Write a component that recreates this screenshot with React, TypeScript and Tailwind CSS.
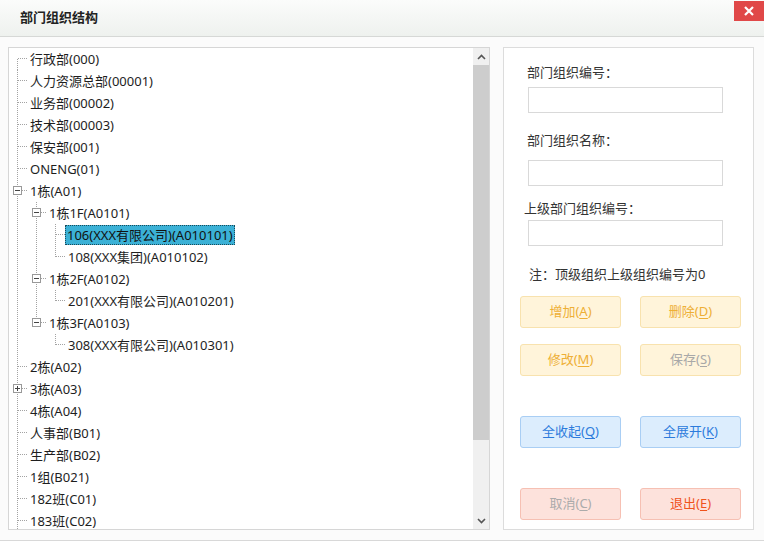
import React from "react";

type Guide = "v" | "none" | "tee" | "elbow" | "first";

interface Node {
  label: string;
  guides: Guide[];
  expander?: "-" | "+";
  selected?: boolean;
}

const TREE: Node[] = [
  { label: "行政部(000)", guides: ["first"] },
  { label: "人力资源总部(00001)", guides: ["tee"] },
  { label: "业务部(00002)", guides: ["tee"] },
  { label: "技术部(00003)", guides: ["tee"] },
  { label: "保安部(001)", guides: ["tee"] },
  { label: "ONENG(01)", guides: ["tee"] },
  { label: "1栋(A01)", guides: ["tee"], expander: "-" },
  { label: "1栋1F(A0101)", guides: ["v", "tee"], expander: "-" },
  { label: "106(XXX有限公司)(A010101)", guides: ["v", "v", "tee"], selected: true },
  { label: "108(XXX集团)(A010102)", guides: ["v", "v", "elbow"] },
  { label: "1栋2F(A0102)", guides: ["v", "tee"], expander: "-" },
  { label: "201(XXX有限公司)(A010201)", guides: ["v", "v", "elbow"] },
  { label: "1栋3F(A0103)", guides: ["v", "elbow"], expander: "-" },
  { label: "308(XXX有限公司)(A010301)", guides: ["v", "none", "elbow"] },
  { label: "2栋(A02)", guides: ["tee"] },
  { label: "3栋(A03)", guides: ["tee"], expander: "+" },
  { label: "4栋(A04)", guides: ["tee"] },
  { label: "人事部(B01)", guides: ["tee"] },
  { label: "生产部(B02)", guides: ["tee"] },
  { label: "1组(B021)", guides: ["tee"] },
  { label: "182班(C01)", guides: ["tee"] },
  { label: "183班(C02)", guides: ["tee"] },
];

const LINE = "#a3a3a3";

function GuideCell({ kind, expander }: { kind: Guide; expander?: "-" | "+" }) {
  return (
    <svg width="19" height="22" className="shrink-0 block">
      {(kind === "v" || kind === "tee") && (
        <line x1="8.5" y1="0" x2="8.5" y2="22" stroke={LINE} strokeDasharray="1 1" />
      )}
      {kind === "elbow" && <line x1="8.5" y1="0" x2="8.5" y2="11" stroke={LINE} strokeDasharray="1 1" />}
      {kind === "first" && <line x1="8.5" y1="11" x2="8.5" y2="22" stroke={LINE} strokeDasharray="1 1" />}
      {kind !== "v" && kind !== "none" && (
        <line x1="9" y1="10.5" x2="19" y2="10.5" stroke={LINE} strokeDasharray="1 1" />
      )}
      {expander && (
        <g>
          <rect x="4.5" y="6.5" width="8" height="8" fill="#fff" stroke="#999" />
          <line x1="6" y1="10.5" x2="11" y2="10.5" stroke="#444" />
          {expander === "+" && <line x1="8.5" y1="8" x2="8.5" y2="13" stroke="#444" />}
        </g>
      )}
    </svg>
  );
}

function TreeRow({ node }: { node: Node }) {
  const last = node.guides.length - 1;
  return (
    <div className="flex items-center h-[22px] shrink-0">
      {node.guides.map((g, i) => (
        <GuideCell key={i} kind={g} expander={i === last ? node.expander : undefined} />
      ))}
      {node.selected ? (
        <span className="ml-[-1px] h-[20px] leading-[18px] px-[1px] bg-[#3bb1d6] border border-dotted border-[#1a4a5a] text-[#111] whitespace-nowrap">
          {node.label}
        </span>
      ) : (
        <span className="pl-[2px] leading-[20px] text-[#1e1e1e] whitespace-nowrap">{node.label}</span>
      )}
    </div>
  );
}

function Chevron({ up }: { up?: boolean }) {
  return (
    <svg width="9" height="6" viewBox="0 0 9 6">
      <path
        d={up ? "M1 5 L4.5 1.5 L8 5" : "M1 1 L4.5 4.5 L8 1"}
        fill="none"
        stroke="#555"
        strokeWidth="1.6"
      />
    </svg>
  );
}

const BTN_STYLE = {
  yellow: "bg-[#fff4da] border-[#f8e2ae]",
  blue: "bg-[#dcedfd] border-[#a9cef4]",
  red: "bg-[#fde2dc] border-[#f6c0b3]",
};

function Btn({
  text,
  hot,
  tone,
  color,
}: {
  text: string;
  hot: string;
  tone: "yellow" | "blue" | "red";
  color: string;
}) {
  return (
    <button
      className={`w-[101px] h-[32px] rounded-[3px] border text-[13px] flex items-center justify-center ${BTN_STYLE[tone]} ${color}`}
    >
      {text}(<span className="underline underline-offset-2">{hot}</span>)
    </button>
  );
}

export default function App() {
  return (
    <div
      className="w-[764px] h-[541px] bg-[#fbfbfb] border-b border-[#d8d8d8] flex flex-col overflow-hidden text-[13px]"
      style={{ fontFamily: '"Noto Sans", "Noto Sans CJK SC", sans-serif' }}
    >
      {/* Title bar */}
      <div className="h-[37px] shrink-0 flex justify-between bg-gradient-to-b from-[#fbfcfb] to-[#eef1ee] border-b border-[#d6d8d6]">
        <div className="pl-[20px] pt-[8px] font-bold text-[13px] text-[#222]">部门组织结构</div>
        <button className="mt-[1px] w-[30px] h-[20px] bg-[#e04848] flex items-center justify-center">
          <svg width="12" height="12" viewBox="0 0 12 12">
            <path d="M2 2 L10 10 M10 2 L2 10" stroke="#fff" strokeWidth="2.2" />
          </svg>
        </button>
      </div>

      <div className="flex pt-[10px] pl-[8px] gap-[13px]">
        {/* Tree panel */}
        <div className="w-[482px] h-[483px] bg-white border border-[#d6d6d6] flex overflow-hidden">
          <div className="flex-1 flex flex-col overflow-hidden">
            {TREE.map((n, i) => (
              <TreeRow key={i} node={n} />
            ))}
          </div>
          <div className="w-[16px] flex flex-col bg-[#f0f0f0]">
            <div className="h-[17px] flex items-center justify-center">
              <Chevron up />
            </div>
            <div className="flex-1">
              <div className="h-[375px] bg-[#cdcdcd]" />
            </div>
            <div className="h-[17px] flex items-center justify-center">
              <Chevron />
            </div>
          </div>
        </div>

        {/* Form panel */}
        <div className="w-[251px] h-[483px] bg-white border border-[#dcdcdc] flex flex-col text-[#333]">
          <div className="pl-[23px] mt-[14px] leading-[20px]">部门组织编号：</div>
          <input className="ml-[24px] mt-[5px] w-[195px] h-[26px] border border-[#d9d9d9] outline-none" />
          <div className="pl-[23px] mt-[17px] leading-[20px]">部门组织名称：</div>
          <input className="ml-[24px] mt-[10px] w-[195px] h-[26px] border border-[#d9d9d9] outline-none" />
          <div className="pl-[20px] mt-[12px] leading-[20px]">上级部门组织编号：</div>
          <input className="ml-[24px] mt-[2px] w-[195px] h-[26px] border border-[#d9d9d9] outline-none" />
          <div className="pl-[25px] mt-[18px] leading-[20px]">注：顶级组织上级组织编号为0</div>

          <div className="pl-[16px] mt-[12px] grid grid-cols-[101px_101px] gap-x-[19px]">
            <Btn text="增加" hot="A" tone="yellow" color="text-[#eeaf35]" />
            <Btn text="删除" hot="D" tone="yellow" color="text-[#eeaf35]" />
            <div className="col-span-2 h-[16px]" />
            <Btn text="修改" hot="M" tone="yellow" color="text-[#eeaf35]" />
            <Btn text="保存" hot="S" tone="yellow" color="text-[#a8a8a8]" />
            <div className="col-span-2 h-[40px]" />
            <Btn text="全收起" hot="Q" tone="blue" color="text-[#2c7bdc]" />
            <Btn text="全展开" hot="K" tone="blue" color="text-[#2c7bdc]" />
            <div className="col-span-2 h-[40px]" />
            <Btn text="取消" hot="C" tone="red" color="text-[#ababab]" />
            <Btn text="退出" hot="E" tone="red" color="text-[#f0531c]" />
          </div>
        </div>
      </div>
    </div>
  );
}
